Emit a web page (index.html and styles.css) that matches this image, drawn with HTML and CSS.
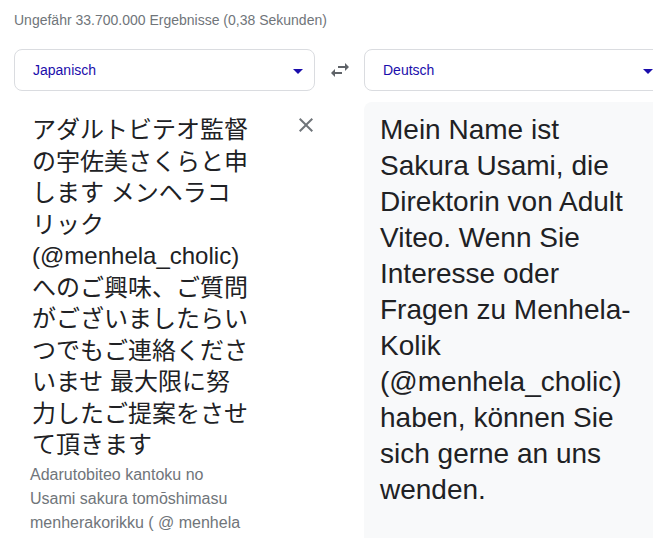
FILE: index.html
```html
<!DOCTYPE html>
<html lang="de">
<head>
  <meta charset="UTF-8" />
  <meta name="viewport" content="width=device-width, initial-scale=1.0"/>
  <title>Übersetzer</title>
  <link rel="stylesheet" href="styles.css">
</head>
<body>
  <div class="page">
    <p class="stats">Ungefähr 33.700.000 Ergebnisse (0,38 Sekunden)</p>

    <div class="langbar">
      <div class="lang-select">
        <span>Japanisch</span>
        <span class="caret"></span>
      </div>
      <button class="swap" title="Sprachen tauschen">
        <svg viewBox="0 0 24 24" width="24" height="24"><path d="M6.99 11L3 15l3.99 4v-3H14v-2H6.99v-3zM21 9l-3.99-4v3H10v2h7.01v3L21 9z"/></svg>
      </button>
      <div class="lang-select">
        <span>Deutsch</span>
        <span class="caret"></span>
      </div>
    </div>

    <div class="panels">
      <div class="source">
        <div class="source-row">
          <p class="source-text">アダルトビテオ監督の宇佐美さくらと申します メンヘラコリック(@menhela_cholic)へのご興味、ご質問がございましたらいつでもご連絡くださいませ 最大限に努力したご提案をさせて頂きます</p>
          <button class="clear" title="Text löschen">
            <svg viewBox="0 0 24 24" width="24" height="24"><path d="M19 6.41L17.59 5 12 10.59 6.41 5 5 6.41 10.59 12 5 17.59 6.41 19 12 13.41 17.59 19 19 17.59 13.41 12z"/></svg>
          </button>
        </div>
        <p class="translit">Adarutobiteo kantoku no Usami sakura tomōshimasu menherakorikku ( @ menhela</p>
      </div>
      <div></div>
      <div class="target">
        <p>Mein Name ist Sakura Usami, die Direktorin von Adult Viteo. Wenn Sie Interesse oder Fragen zu Menhela-Kolik (@menhela_cholic) haben, können Sie sich gerne an uns wenden.</p>
      </div>
    </div>
  </div>
</body>
</html>
```

FILE: styles.css
```css
* { box-sizing: border-box; margin: 0; padding: 0; }
body {
  background: white;
  color: #202124;
  font-family: "Liberation Sans", Arial, "Noto Sans CJK JP", sans-serif;
  overflow: hidden;
}
.page { width: 680px; padding: 10px 0 0 14px; }
.stats { font-size: 14px; line-height: 20px; color: #70757a; }

.langbar {
  display: grid;
  grid-template-columns: 301px 49px 301px;
  margin-top: 19px;
}
.lang-select {
  height: 42px;
  display: flex;
  align-items: center;
  justify-content: space-between;
  padding: 0 11px 0 18px;
  border: 1px solid #dadce0;
  border-radius: 8px;
  font-size: 14px;
  color: #1a0dab;
}
.caret {
  width: 0;
  height: 0;
  border-left: 5px solid transparent;
  border-right: 5px solid transparent;
  border-top: 5px solid #1a0dab;
  margin-top: 2px;
}
.swap, .clear {
  background: none;
  border: none;
  cursor: pointer;
  display: flex;
  align-items: center;
  justify-content: center;
}
.swap svg { fill: #5f6368; }
.clear svg { fill: #70757a; }

.panels {
  display: grid;
  grid-template-columns: 301px 49px 301px;
  margin-top: 11px;
}
.source { padding: 12px 0 0 18px; }
.source-row { display: flex; align-items: flex-start; }
.source-text {
  flex: none;
  width: 220px;
  font-size: 24px;
  line-height: 31.5px;
}
.clear { flex: none; width: 24px; height: 24px; margin: -1px 0 0 42px; }
.translit {
  margin: 2px 0 0 -2px;
  width: 222px;
  font-size: 16px;
  line-height: 24px;
  color: #70757a;
}
.target {
  min-height: 440px;
  padding: 10px 24px 0 16px;
  background: #f8f9fa;
  border-radius: 8px 0 0 0;
}
.target p { font-size: 28px; line-height: 36px; }
```
